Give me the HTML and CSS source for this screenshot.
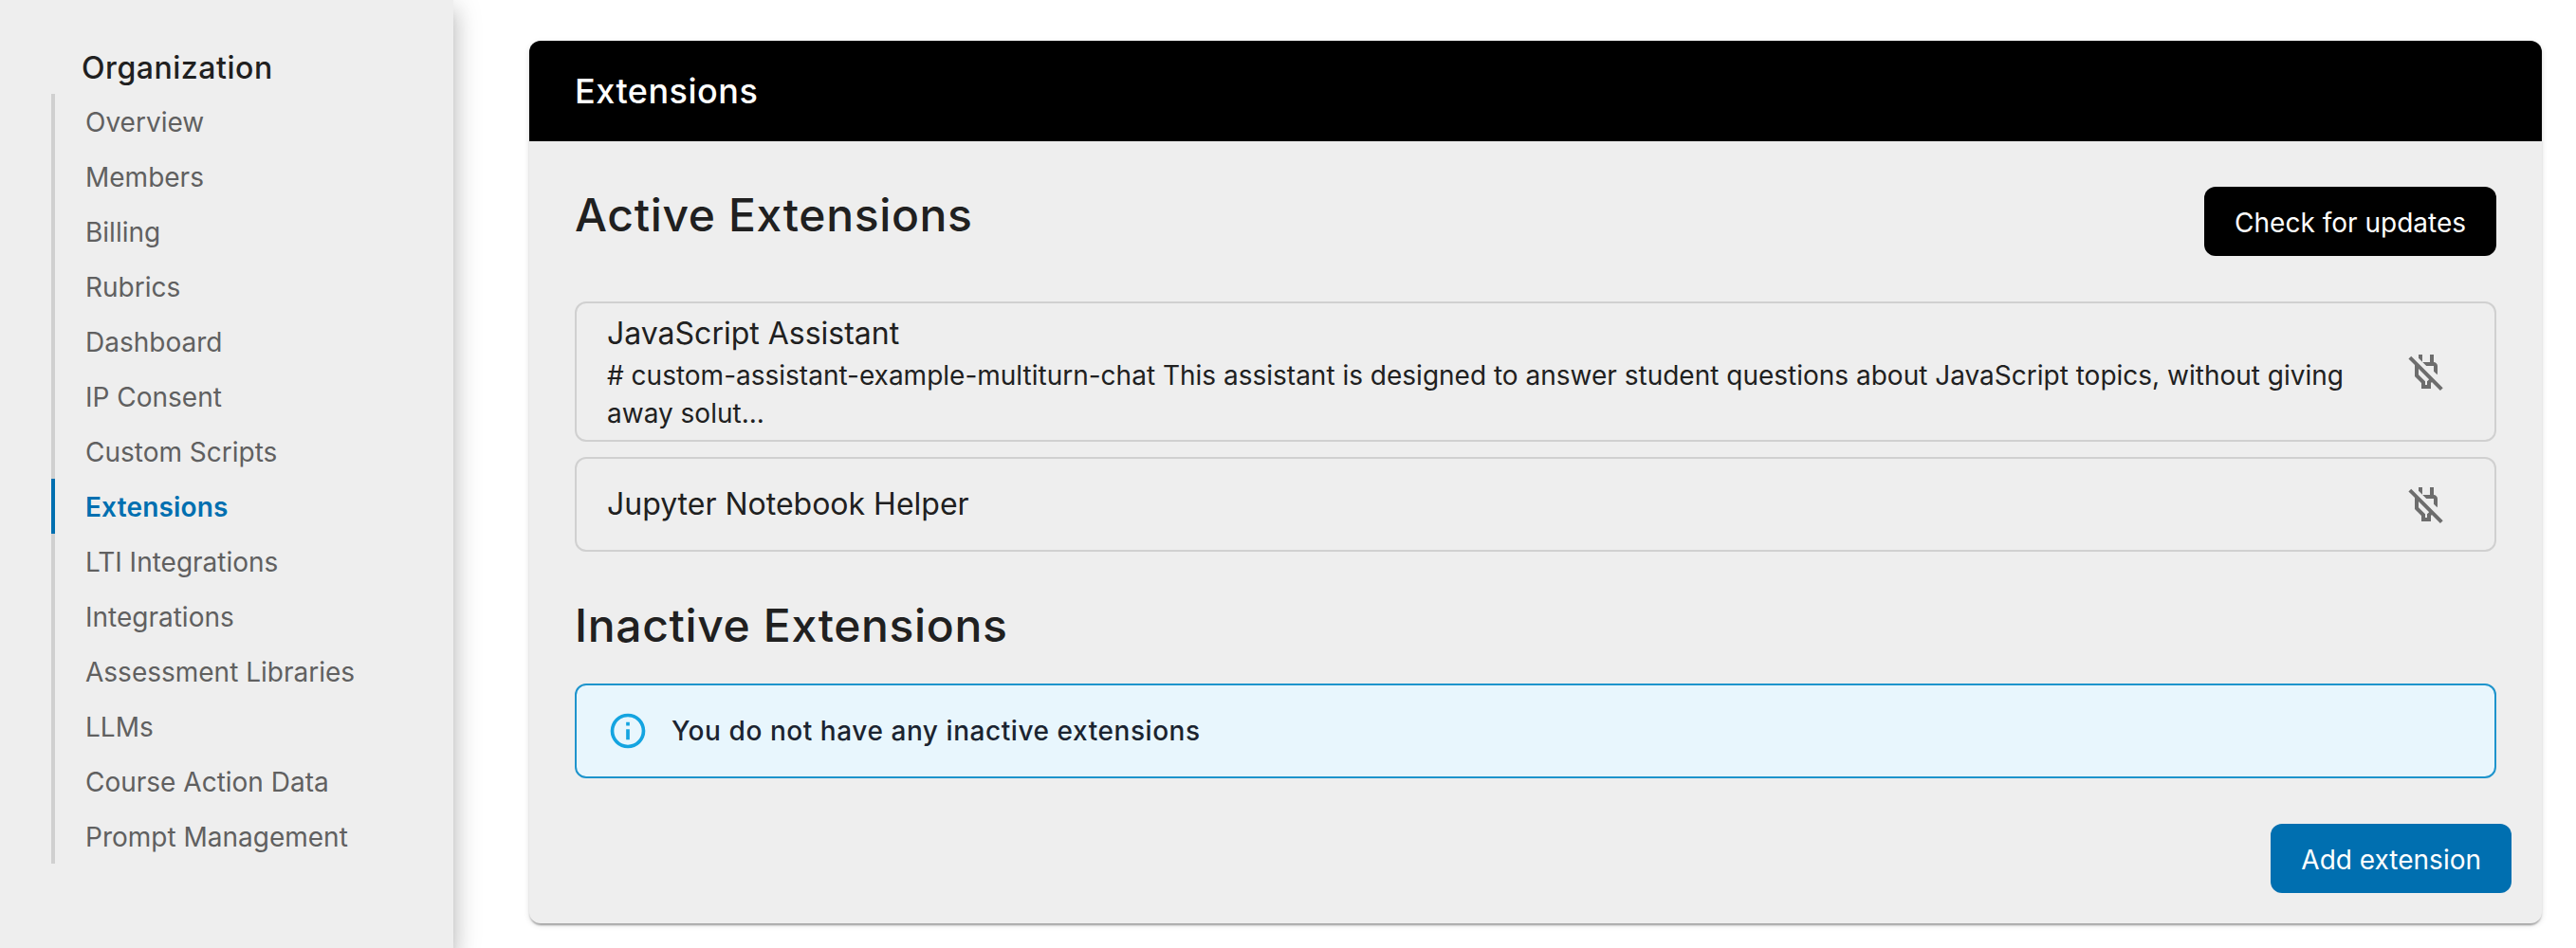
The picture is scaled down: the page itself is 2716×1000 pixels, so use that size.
FILE: index.html
```html
<!DOCTYPE html>
<html lang="en">

<head>
  <meta charset="UTF-8" />
  <meta name="viewport" content="width=device-width, initial-scale=1.0" />
  <title>Organization • Extensions</title>
  <link rel="stylesheet" href="styles.css">
</head>

<body>

  <aside class="sidebar">
    <h2 class="sidebar-title">Organization</h2>
    <nav class="side-nav">
      <a href="#">Overview</a>
      <a href="#">Members</a>
      <a href="#">Billing</a>
      <a href="#">Rubrics</a>
      <a href="#">Dashboard</a>
      <a href="#">IP Consent</a>
      <a href="#">Custom Scripts</a>
      <a href="#" class="active">Extensions</a>
      <a href="#">LTI Integrations</a>
      <a href="#">Integrations</a>
      <a href="#">Assessment Libraries</a>
      <a href="#">LLMs</a>
      <a href="#">Course Action Data</a>
      <a href="#">Prompt Management</a>
    </nav>
  </aside>

  <main class="content">
    <section class="card">
      <header class="card-header">Extensions</header>

      <div class="card-body">
        <div class="section-head">
          <h1>Active Extensions</h1>
          <button class="btn btn-dark">Check for updates</button>
        </div>

        <div class="extension-list">
          <div class="extension">
            <div class="extension-text">
              <div class="extension-name">JavaScript Assistant</div>
              <div class="extension-desc"># custom-assistant-example-multiturn-chat This assistant is designed to answer student questions about JavaScript topics, without giving away solut...</div>
            </div>
            <button class="icon-btn" title="Deactivate">
              <svg viewBox="0 0 24 24"><path d="M16 9v2.88l1.8 1.8c.14-.38.2-.78.2-1.18V9c0-1-1-2-2-2V3h-2v4h-3.88l2 2H16zM10 3H8v1.88l2 2zM4.12 3.84 2.71 5.25 6 8.54v5.96L9.5 18v3h5v-3l.48-.48 4.47 4.47 1.41-1.41L4.12 3.84zm8.38 13.33V19h-1v-1.83L8 13.65v-3.11l5.57 5.57-1.07 1.06z" /></svg>
            </button>
          </div>
          <div class="extension">
            <div class="extension-text">
              <div class="extension-name">Jupyter Notebook Helper</div>
            </div>
            <button class="icon-btn" title="Deactivate">
              <svg viewBox="0 0 24 24"><path d="M16 9v2.88l1.8 1.8c.14-.38.2-.78.2-1.18V9c0-1-1-2-2-2V3h-2v4h-3.88l2 2H16zM10 3H8v1.88l2 2zM4.12 3.84 2.71 5.25 6 8.54v5.96L9.5 18v3h5v-3l.48-.48 4.47 4.47 1.41-1.41L4.12 3.84zm8.38 13.33V19h-1v-1.83L8 13.65v-3.11l5.57 5.57-1.07 1.06z" /></svg>
            </button>
          </div>
        </div>

        <h1 class="inactive-title">Inactive Extensions</h1>
        <div class="alert">
          <svg viewBox="0 0 24 24"><path d="M11 9h2V7h-2m1 13c-4.41 0-8-3.59-8-8s3.59-8 8-8 8 3.59 8 8-3.59 8-8 8m0-18A10 10 0 0 0 2 12a10 10 0 0 0 10 10 10 10 0 0 0 10-10A10 10 0 0 0 12 2m-1 15h2v-6h-2v6z" /></svg>
          <span>You do not have any inactive extensions</span>
        </div>
      </div>

      <footer class="card-actions">
        <button class="btn btn-primary">Add extension</button>
      </footer>
    </section>
  </main>

</body>
</html>
```
FILE: styles.css
```css
* {
  box-sizing: border-box;
  font-family: Inter, "Liberation Sans", sans-serif;
}

body {
  margin: 0;
  display: flex;
  height: 100vh;
  overflow: hidden;
  background: white;
  color: #202020;
}

h1,
h2 {
  margin: 0;
  font-weight: 500;
}

button {
  border: none;
  cursor: pointer;
}

/* Sidebar */
.sidebar {
  width: 478px;
  flex-shrink: 0;
  padding: 48px 54px;
  background: #eeeeee;
  box-shadow: 0 10px 10px -6px rgba(0, 0, 0, 0.2),
    0 16px 20px 2px rgba(0, 0, 0, 0.14),
    0 6px 28px 4px rgba(0, 0, 0, 0.12);
}

.sidebar-title {
  padding-left: 32px;
  font-size: 32px;
  line-height: 48px;
  letter-spacing: 0.017em;
  margin-bottom: 3px;
}

.side-nav {
  display: flex;
  flex-direction: column;
}

.side-nav a {
  height: 58px;
  padding-left: 32px;
  border-left: 4px solid #d0d0d0;
  font-size: 28px;
  line-height: 60px;
  color: #606060;
  text-decoration: none;
  white-space: nowrap;
}

.side-nav a.active {
  border-left-color: #006fb0;
  color: #006fb0;
  font-weight: 600;
  letter-spacing: 0.006em;
}

/* Main card */
.content {
  flex: 1;
  padding: 43px 36px 0 80px;
}

.card {
  background: #eeeeee;
  border-radius: 12px;
  box-shadow: 0 4px 2px -2px rgba(0, 0, 0, 0.2),
    0 2px 2px 0 rgba(0, 0, 0, 0.14),
    0 2px 6px 0 rgba(0, 0, 0, 0.12);
}

.card-header {
  height: 106px;
  padding: 0 48px;
  background: black;
  border-radius: 12px 12px 0 0;
  color: white;
  font-size: 36px;
  font-weight: 500;
  line-height: 106px;
  letter-spacing: 0.014em;
}

.card-body {
  padding: 48px 48px 0;
}

.section-head {
  display: flex;
  justify-content: space-between;
  align-items: flex-start;
  margin-bottom: 48px;
}

h1 {
  font-size: 48px;
  line-height: 60px;
  letter-spacing: 0.0135em;
}

.btn {
  height: 73px;
  padding: 2px 32px 0;
  border-radius: 12px;
  color: white;
  font-size: 28px;
}

.btn-dark {
  background: black;
}

.btn-primary {
  background: #006fb0;
}

.extension-list {
  display: flex;
  flex-direction: column;
  gap: 16px;
}

.extension {
  display: flex;
  justify-content: space-between;
  align-items: center;
  min-height: 100px;
  padding: 8px 32px;
  border: 2px solid #d0d0d0;
  border-radius: 12px;
}

.extension-text {
  width: 1850px;
}

.extension-name {
  font-size: 32px;
  line-height: 48px;
}

.extension-desc {
  font-size: 28px;
  line-height: 40px;
}

.icon-btn {
  display: flex;
  padding: 16px;
  background: none;
}

.icon-btn svg {
  width: 48px;
  height: 48px;
  fill: #6d6d6d;
}

.inactive-title {
  margin: 48px 0 31px;
}

.alert {
  display: flex;
  align-items: center;
  gap: 24px;
  height: 100px;
  padding: 0 32px;
  background: #e8f6fd;
  border: 2px solid #1e94cc;
  border-radius: 12px;
  color: #1b2430;
  font-size: 28px;
  font-weight: 500;
  letter-spacing: 0.02em;
}

.alert svg {
  width: 44px;
  height: 44px;
  fill: #14a4e0;
}

.card-actions {
  display: flex;
  justify-content: flex-end;
  padding: 48px 32px 32px;
}
```
